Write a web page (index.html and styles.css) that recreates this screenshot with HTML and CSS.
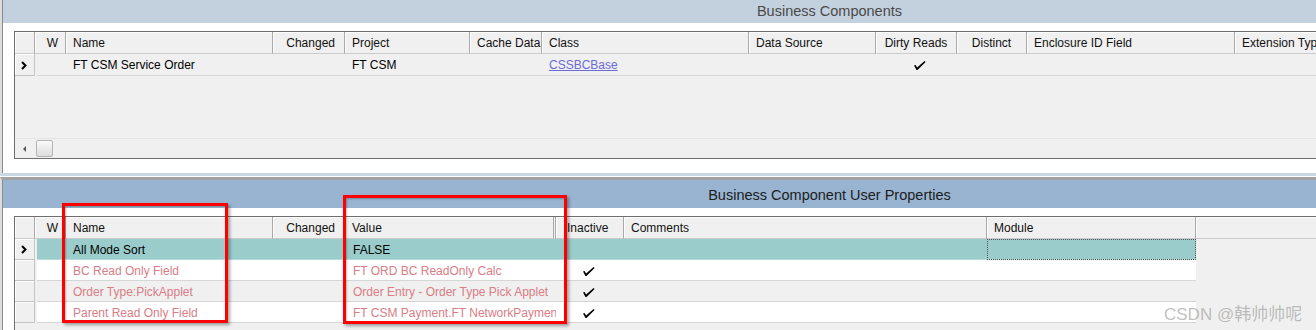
FILE: index.html
```html
<!DOCTYPE html>
<html>
<head>
<meta charset="utf-8">
<link rel="stylesheet" href="styles.css">
</head>
<body>
<div class="app">
  <section class="panel panel-top">
    <div class="title title-top">Business Components</div>
    <div class="gap"></div>
    <div class="grid grid-top">
      <div class="hdr">
        <div class="hc"></div>
        <div class="hc right pr7">W</div>
        <div class="hc">Name</div>
        <div class="hc right pr9">Changed</div>
        <div class="hc">Project</div>
        <div class="hc">Cache Data</div>
        <div class="hc">Class</div>
        <div class="hc">Data Source</div>
        <div class="hc center">Dirty Reads</div>
        <div class="hc center">Distinct</div>
        <div class="hc">Enclosure ID Field</div>
        <div class="hc">Extension Type</div>
      </div>
      <div class="row row-top">
        <div class="ind"><svg class="chev" width="6" height="9" viewBox="0 0 6 9"><polyline points="1,1 4.5,4.5 1,8" fill="none" stroke="#000" stroke-width="2"/></svg></div>
        <div class="c first"></div>
        <div class="c">FT CSM Service Order</div>
        <div class="c"></div>
        <div class="c">FT CSM</div>
        <div class="c"></div>
        <div class="c"><span class="link">CSSBCBase</span></div>
        <div class="c"></div>
        <div class="c center"><svg class="chk" width="12" height="9" viewBox="0 0 12 9"><polygon points="0,4.6 1.6,3.9 3.1,6.4 10.6,0 11.6,0.9 3.5,8.9 2.5,8.9" fill="#000"/></svg></div>
        <div class="c"></div>
        <div class="c"></div>
        <div class="c"></div>
      </div>
      <div class="empty"></div>
      <div class="hscroll">
        <span class="arrow-left"></span>
        <span class="thumb"></span>
      </div>
    </div>
    <div class="tail"></div>
  </section>

  <section class="panel panel-bottom">
    <div class="title title-bottom">Business Component User Properties</div>
    <div class="gap"></div>
    <div class="grid grid-bottom">
      <div class="hdr">
        <div class="hc"></div>
        <div class="hc right pr7">W</div>
        <div class="hc">Name</div>
        <div class="hc right pr9">Changed</div>
        <div class="hc value-h">Value</div>
        <div class="hc pl11">Inactive</div>
        <div class="hc">Comments</div>
        <div class="hc">Module</div>
        <div class="hc"></div>
      </div>
      <div class="row sel">
        <div class="ind"><svg class="chev" width="6" height="9" viewBox="0 0 6 9"><polyline points="1,1 4.5,4.5 1,8" fill="none" stroke="#000" stroke-width="2"/></svg></div>
        <div class="c first"></div>
        <div class="c">All Mode Sort</div>
        <div class="c"></div>
        <div class="c val">FALSE</div>
        <div class="c"></div>
        <div class="c"></div>
        <div class="c focus"></div>
      </div>
      <div class="row inactive white">
        <div class="ind"></div>
        <div class="c first"></div>
        <div class="c">BC Read Only Field</div>
        <div class="c"></div>
        <div class="c val">FT ORD BC ReadOnly Calc</div>
        <div class="c chkcell"><svg class="chk" width="12" height="9" viewBox="0 0 12 9"><polygon points="0,4.6 1.6,3.9 3.1,6.4 10.6,0 11.6,0.9 3.5,8.9 2.5,8.9" fill="#000"/></svg></div>
        <div class="c"></div>
        <div class="c"></div>
      </div>
      <div class="row inactive gray">
        <div class="ind"></div>
        <div class="c first"></div>
        <div class="c">Order Type:PickApplet</div>
        <div class="c"></div>
        <div class="c val">Order Entry - Order Type Pick Applet</div>
        <div class="c chkcell"><svg class="chk" width="12" height="9" viewBox="0 0 12 9"><polygon points="0,4.6 1.6,3.9 3.1,6.4 10.6,0 11.6,0.9 3.5,8.9 2.5,8.9" fill="#000"/></svg></div>
        <div class="c"></div>
        <div class="c"></div>
      </div>
      <div class="row inactive white">
        <div class="ind"></div>
        <div class="c first"></div>
        <div class="c">Parent Read Only Field</div>
        <div class="c"></div>
        <div class="c val">FT CSM Payment.FT NetworkPayment</div>
        <div class="c chkcell"><svg class="chk" width="12" height="9" viewBox="0 0 12 9"><polygon points="0,4.6 1.6,3.9 3.1,6.4 10.6,0 11.6,0.9 3.5,8.9 2.5,8.9" fill="#000"/></svg></div>
        <div class="c"></div>
        <div class="c"></div>
      </div>
    </div>
  </section>

  <div class="mark mark-name"></div>
  <div class="mark mark-value"></div>
  <div class="watermark">CSDN @韩帅帅呢</div>
</div>
</body>
</html>
```

FILE: styles.css
```css
html, body {
  margin: 0;
  padding: 0;
  background: #fff;
}
body {
  width: 1316px;
  height: 330px;
  overflow: hidden;
  font-family: "Liberation Sans", Arial, sans-serif;
  font-size: 12px;
  color: #000;
}
.app {
  position: relative;
  width: 1316px;
  height: 330px;
  overflow: hidden;
}
.panel {
  border-left: 2px solid #dcdcdc;
  box-shadow: inset 1px 0 0 #8a8a8a;
  padding-left: 1px;
  overflow: hidden;
}
.panel-top {
  height: 173px;
  border-bottom: 3px solid #c9d6e3;
}
.panel-bottom {
  margin-top: 1px;
  border-top: 3px solid #a2a2a2;
  height: 150px;
}
.title {
  padding-left: 340px;
  text-align: center;
  font-size: 14.5px;
  white-space: nowrap;
}
.title-top {
  height: 23px;
  line-height: 22px;
  background: #c3d0de;
  color: #4a4a4a;
}
.title-bottom {
  height: 28px;
  line-height: 31px;
  background: #98b4d1;
  color: #1c1c1c;
}
.gap {
  height: 8px;
  background: #fff;
}
.grid {
  margin-left: 11px;
  border: 1px solid #6e6e6e;
  border-right: none;
  background: #f0f0f0;
  width: 1420px;
}
.grid-top {
  --cols: 20px 31px 207px 72px 125px 72px 207px 127px 81px 70px 208px 200px;
}
.grid-bottom {
  --cols: 20px 31px 207px 72px 211px 68px 363px 209px 240px;
  height: 120px;
  border-bottom: none;
}
.hdr, .row {
  display: grid;
  grid-template-columns: var(--cols);
}
.hdr {
  height: 22px;
}
.hc {
  box-sizing: border-box;
  height: 22px;
  line-height: 23px;
  padding-left: 7px;
  border-right: 1px solid #a9a9a9;
  border-bottom: 1px solid #cbcbcb;
  box-shadow: inset 1px 1px 0 #fdfdfd;
  background: #f0f0f0;
  white-space: nowrap;
  overflow: hidden;
  color: #111;
}
.hc.right { text-align: right; padding-left: 0; }
.hc.center { text-align: center; padding-left: 0; }
.pr7 { padding-right: 7px; }
.pr9 { padding-right: 9px; }
.pl11 { padding-left: 11px; }
.value-h {
  border-right: 3px double #a9a9a9;
}
.row {
  height: 21px;
}
.row-top {
  height: 22px;
}
.ind {
  box-sizing: border-box;
  height: 100%;
  width: 20px;
  border-right: 1px solid #c4c4c4;
  border-bottom: 1px solid #c4c4c4;
  box-shadow: inset 1px 1px 0 #fff;
  background: #f0f0f0;
  display: flex;
  align-items: center;
  padding-left: 6px;
  padding-top: 1px;
}
.chev { display: block; }
.c {
  box-sizing: border-box;
  height: 100%;
  padding-left: 7px;
  line-height: 23px;
  white-space: nowrap;
  overflow: hidden;
  border-bottom: 1px solid #d6d6d6;
}
.c.val {
  padding-left: 8px;
  padding-right: 5px;
  text-overflow: clip;
}
.c.first { margin-left: 2px; }
.c.center {
  display: flex;
  align-items: center;
  justify-content: center;
  padding-left: 6px;
  padding-top: 2px;
}
.chkcell {
  display: flex;
  align-items: center;
  padding-left: 27px;
  padding-top: 2px;
}
.link {
  color: #6b6bd6;
  text-decoration: underline;
}
.row-top .c { background: #f0f0f0; }
.sel .c { background: #99cccb; border-bottom-color: #b9dcdc; }
.white .c { background: #fff; }
.gray .c { background: #f0f0f0; }
.inactive .c { color: #d97d86; }
.focus {
  outline: 1px dotted #555;
  outline-offset: -1px;
}
.empty {
  height: 62px;
}
.hscroll {
  height: 20px;
  border-top: 1px solid #e4e4e4;
  box-sizing: border-box;
  display: flex;
  align-items: center;
  background: #f0f0f0;
}
.arrow-left {
  width: 0;
  height: 0;
  margin-left: 8px;
  border-top: 3px solid transparent;
  border-bottom: 3px solid transparent;
  border-right: 3px solid #555;
}
.thumb {
  margin-left: 10px;
  width: 15px;
  height: 15px;
  border: 1px solid #b5b5b5;
  border-radius: 2px;
  background: linear-gradient(#fafafa, #dcdcdc);
}
.tail {
  height: 14px;
}
.mark {
  position: absolute;
  border: 3px solid #f00;
  box-sizing: border-box;
  box-shadow: 2px 2px 3px rgba(0,0,0,0.35), inset 1px 1px 2px rgba(0,0,0,0.25);
}
.mark-name {
  left: 62px;
  top: 203px;
  width: 166px;
  height: 120px;
}
.mark-value {
  left: 343px;
  top: 195px;
  width: 224px;
  height: 129px;
}
.watermark {
  position: absolute;
  left: 1164px;
  top: 300px;
  font-family: "Liberation Sans", "Noto Sans CJK SC", sans-serif;
  font-size: 17px;
  color: rgba(150,150,150,0.6);
  white-space: nowrap;
}
```
